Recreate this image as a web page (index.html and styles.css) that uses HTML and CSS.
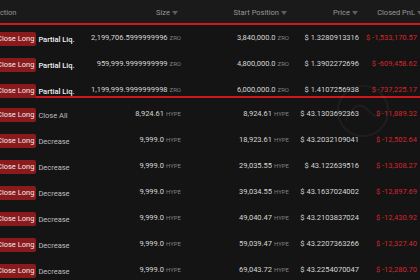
FILE: index.html
```html
<!DOCTYPE html>
<html lang="en">
<head>
  <meta name="viewport" content="width=device-width, initial-scale=1">
  <link rel="stylesheet" href="styles.css">
</head>
<body>
  <section class="fills">
    <div class="row head">
      <div class="c-action">Action</div>
      <div class="c-size">Size<svg class="sort" viewBox="0 0 6 4"><path d="M0 0h6L3 4z"/></svg></div>
      <div class="c-start">Start Position<svg class="sort" viewBox="0 0 6 4"><path d="M0 0h6L3 4z"/></svg></div>
      <div class="c-price">Price<svg class="sort" viewBox="0 0 6 4"><path d="M0 0h6L3 4z"/></svg></div>
      <div class="c-pnl">Closed PnL<svg class="sort" viewBox="0 0 6 4"><path d="M0 0h6L3 4z"/></svg></div>
    </div>

    <div class="group">
      <div class="row">
        <div class="c-action"><span class="badge">Close Long</span><span class="dir strong">Partial Liq.</span></div>
        <div class="c-size">2,199,706.5999999996<span class="unit">ZRO</span></div>
        <div class="c-start">3,840,000.0<span class="unit">ZRO</span></div>
        <div class="c-price">$ 1.3280913316</div>
        <div class="c-pnl neg">$ -1,533,170.57</div>
      </div>
      <div class="row">
        <div class="c-action"><span class="badge">Close Long</span><span class="dir strong">Partial Liq.</span></div>
        <div class="c-size">959,999.9999999999<span class="unit">ZRO</span></div>
        <div class="c-start">4,800,000.0<span class="unit">ZRO</span></div>
        <div class="c-price">$ 1.3902272696</div>
        <div class="c-pnl neg">$ -609,458.62</div>
      </div>
      <div class="row last">
        <div class="c-action"><span class="badge">Close Long</span><span class="dir strong">Partial Liq.</span></div>
        <div class="c-size">1,199,999.9999999998<span class="unit">ZRO</span></div>
        <div class="c-start">6,000,000.0<span class="unit">ZRO</span></div>
        <div class="c-price">$ 1.4107256938</div>
        <div class="c-pnl neg">$ -737,225.17</div>
      </div>
    </div>

    <div class="row">
      <div class="c-action"><span class="badge">Close Long</span><span class="dir">Close All</span></div>
      <div class="c-size">8,924.61<span class="unit">HYPE</span></div>
      <div class="c-start">8,924.61<span class="unit">HYPE</span></div>
      <div class="c-price">$ 43.1303692363</div>
      <div class="c-pnl neg">$ -11,889.32</div>
    </div>
    <div class="row">
      <div class="c-action"><span class="badge">Close Long</span><span class="dir">Decrease</span></div>
      <div class="c-size">9,999.0<span class="unit">HYPE</span></div>
      <div class="c-start">18,923.61<span class="unit">HYPE</span></div>
      <div class="c-price">$ 43.2032109041</div>
      <div class="c-pnl neg">$ -12,502.64</div>
    </div>
    <div class="row">
      <div class="c-action"><span class="badge">Close Long</span><span class="dir">Decrease</span></div>
      <div class="c-size">9,999.0<span class="unit">HYPE</span></div>
      <div class="c-start">29,035.55<span class="unit">HYPE</span></div>
      <div class="c-price">$ 43.122639516</div>
      <div class="c-pnl neg">$ -13,308.27</div>
    </div>
    <div class="row">
      <div class="c-action"><span class="badge">Close Long</span><span class="dir">Decrease</span></div>
      <div class="c-size">9,999.0<span class="unit">HYPE</span></div>
      <div class="c-start">39,034.55<span class="unit">HYPE</span></div>
      <div class="c-price">$ 43.1637024002</div>
      <div class="c-pnl neg">$ -12,897.69</div>
    </div>
    <div class="row">
      <div class="c-action"><span class="badge">Close Long</span><span class="dir">Decrease</span></div>
      <div class="c-size">9,999.0<span class="unit">HYPE</span></div>
      <div class="c-start">49,040.47<span class="unit">HYPE</span></div>
      <div class="c-price">$ 43.2103837024</div>
      <div class="c-pnl neg">$ -12,430.92</div>
    </div>
    <div class="row">
      <div class="c-action"><span class="badge">Close Long</span><span class="dir">Decrease</span></div>
      <div class="c-size">9,999.0<span class="unit">HYPE</span></div>
      <div class="c-start">59,039.47<span class="unit">HYPE</span></div>
      <div class="c-price">$ 43.2207363266</div>
      <div class="c-pnl neg">$ -12,327.40</div>
    </div>
    <div class="row">
      <div class="c-action"><span class="badge">Close Long</span><span class="dir">Decrease</span></div>
      <div class="c-size">9,999.0<span class="unit">HYPE</span></div>
      <div class="c-start">69,043.72<span class="unit">HYPE</span></div>
      <div class="c-price">$ 43.2254070047</div>
      <div class="c-pnl neg">$ -12,280.70</div>
    </div>

    <svg class="watermark" viewBox="0 0 60 60">
      <circle cx="30" cy="30" r="26" fill="none" stroke="#fff" stroke-width="2"/>
      <path d="M12 40c6-14 14-20 22-12s10 10 16 2" fill="none" stroke="#fff" stroke-width="2"/>
    </svg>
  </section>
</body>
</html>
```

FILE: styles.css
```css
/* ******************** global ******************* */

* {
  box-sizing: border-box;
}

html,
body {
  margin: 0;
  padding: 0;
  width: 100%;
  height: 100%;
  background-color: #141414;
  overflow: hidden;
}

.fills {
  position: relative;
  margin-left: -6px;
  width: 440px;
  font-family: Roboto, "Noto Sans", sans-serif;
  font-size: 7.5px;
  color: #d6d6d6;
}

/* ******************** rows ******************* */

.row {
  display: flex;
  align-items: flex-start;
  height: 26px;
  padding-top: 7px;
  line-height: 11px;
  white-space: nowrap;
}

.row.head {
  height: 23px;
  padding-top: 7px;
  background-color: #1a1a1a;
  color: #979797;
}

.group {
  border-top: 2px solid #d3151c;
  border-bottom: 2px solid #d3151c;
  margin-bottom: 3px;
}

.group .row.last {
  height: 19px;
}

/* ******************** columns ******************* */

.c-action {
  display: flex;
  align-items: center;
  gap: 2px;
  width: 106px;
  padding-left: 1px;
}

.c-size,
.c-start,
.c-price,
.c-pnl {
  display: flex;
  align-items: center;
  justify-content: flex-end;
}

.c-size {
  width: 81px;
}

.c-start {
  width: 108px;
}

.c-price {
  width: 70px;
}

.c-pnl {
  width: 58px;
}

.head .c-size {
  padding-right: 3px;
}

.head .c-start {
  padding-right: 2px;
}

.head .c-price {
  padding-right: 1px;
}

.head .c-pnl .sort {
  margin-right: -6px;
}

.sort {
  width: 6px;
  height: 4px;
  margin-left: 2px;
  fill: #5e5e5e;
}

/* ******************** cells ******************* */

.badge {
  display: inline-block;
  height: 14px;
  line-height: 14px;
  padding: 0 2px;
  border-radius: 2px;
  background-color: #8a1a1c;
  color: #ececec;
}

.dir {
  color: #bdbdbd;
}

.dir.strong {
  color: #f2f2f2;
  font-weight: 500;
}

.unit {
  margin-left: 2px;
  font-size: 6px;
  color: #808080;
}

.neg {
  color: #d4262c;
}

/* ******************** watermark ******************* */

.watermark {
  position: absolute;
  left: 340px;
  top: 82px;
  width: 58px;
  height: 58px;
  opacity: 0.04;
}
```
